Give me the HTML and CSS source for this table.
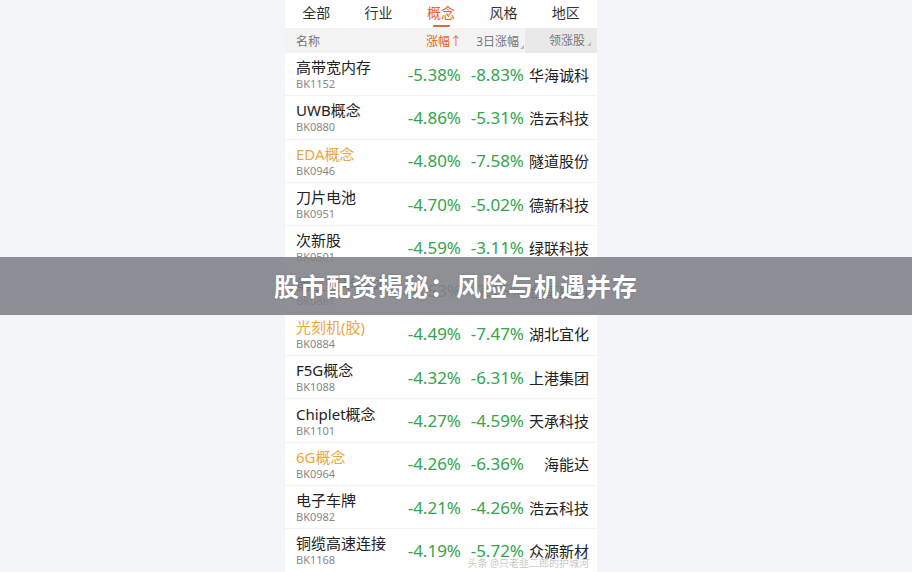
FILE: index.html
```html
<!DOCTYPE html>
<html lang="zh-CN">
<head>
    <meta charset="UTF-8">
    <meta name="viewport" content="width=device-width, initial-scale=1.0">
    <link rel="stylesheet" href="styles.css">
    <title>概念板块</title>
</head>
<body>

    <div class="panel">
        <div class="tabs">
            <div class="tab">全部</div>
            <div class="tab">行业</div>
            <div class="tab active">概念</div>
            <div class="tab">风格</div>
            <div class="tab">地区</div>
        </div>

        <div class="head">
            <span>名称</span>
            <span class="sort">涨幅↑</span>
            <span class="mark">3日涨幅</span>
            <span class="mark shade">领涨股</span>
        </div>

        <div class="row">
            <div class="name">高带宽内存<small>BK1152</small></div>
            <span class="pct">-5.38%</span><span class="pct">-8.83%</span><span class="lead">华海诚科</span>
        </div>
        <div class="row">
            <div class="name">UWB概念<small>BK0880</small></div>
            <span class="pct">-4.86%</span><span class="pct">-5.31%</span><span class="lead">浩云科技</span>
        </div>
        <div class="row">
            <div class="name gold">EDA概念<small>BK0946</small></div>
            <span class="pct">-4.80%</span><span class="pct">-7.58%</span><span class="lead">隧道股份</span>
        </div>
        <div class="row">
            <div class="name">刀片电池<small>BK0951</small></div>
            <span class="pct">-4.70%</span><span class="pct">-5.02%</span><span class="lead">德新科技</span>
        </div>
        <div class="row">
            <div class="name">次新股<small>BK0501</small></div>
            <span class="pct">-4.59%</span><span class="pct">-3.11%</span><span class="lead">绿联科技</span>
        </div>
        <div class="row">
            <div class="name">第三代半导体<small>BK0881</small></div>
            <span class="pct">-4.53%</span><span class="pct">-7.15%</span><span class="lead">台基股份</span>
        </div>
        <div class="row">
            <div class="name gold">光刻机(胶)<small>BK0884</small></div>
            <span class="pct">-4.49%</span><span class="pct">-7.47%</span><span class="lead">湖北宜化</span>
        </div>
        <div class="row">
            <div class="name">F5G概念<small>BK1088</small></div>
            <span class="pct">-4.32%</span><span class="pct">-6.31%</span><span class="lead">上港集团</span>
        </div>
        <div class="row">
            <div class="name">Chiplet概念<small>BK1101</small></div>
            <span class="pct">-4.27%</span><span class="pct">-4.59%</span><span class="lead">天承科技</span>
        </div>
        <div class="row">
            <div class="name gold">6G概念<small>BK0964</small></div>
            <span class="pct">-4.26%</span><span class="pct">-6.36%</span><span class="lead">海能达</span>
        </div>
        <div class="row">
            <div class="name">电子车牌<small>BK0982</small></div>
            <span class="pct">-4.21%</span><span class="pct">-4.26%</span><span class="lead">浩云科技</span>
        </div>
        <div class="row">
            <div class="name">铜缆高速连接<small>BK1168</small></div>
            <span class="pct">-4.19%</span><span class="pct">-5.72%</span><span class="lead">众源新材</span>
        </div>

        <div class="watermark">头条 @只老韭二郎的护城河</div>
    </div>

    <div class="banner">股市配资揭秘：风险与机遇并存</div>

</body>
</html>
```

FILE: styles.css
```css
body {
    margin: 0;
    height: 572px;
    overflow: hidden;
    background-color: #f4f5f9;
    font-family: 'Noto Sans', 'Noto Sans CJK SC', sans-serif;
    color: #222;
}

.panel {
    position: relative;
    width: 312px;
    height: 572px;
    margin-left: 285px;
    background-color: #fff;
}

.tabs {
    display: grid;
    grid-template-columns: repeat(5, 1fr);
    height: 28px;
}

.tab {
    position: relative;
    text-align: center;
    font-size: 14px;
    line-height: 26px;
    color: #333;
}

.tab.active {
    color: #e8622c;
}

.tab.active::after {
    content: '';
    position: absolute;
    left: 50%;
    bottom: 1px;
    width: 17px;
    height: 2px;
    margin-left: -8px;
    border-radius: 1px;
    background-color: #e8622c;
}

.head {
    display: grid;
    grid-template-columns: 1fr 70px 60px 64px;
    align-items: center;
    height: 25px;
    padding: 0 8px 0 11px;
    background-color: #f3f3f4;
    font-size: 12px;
    color: #777;
}

.head span {
    text-align: right;
}

.head span:first-child {
    text-align: left;
}

.head .sort {
    color: #e8622c;
    padding-right: 3px;
}

.mark {
    position: relative;
    padding-right: 6px;
}

.mark::after {
    content: '';
    position: absolute;
    right: 1px;
    bottom: 1px;
    border-left: 4px solid transparent;
    border-bottom: 4px solid #bbb;
}

.head .shade {
    margin-right: -8px;
    padding-right: 12px;
    line-height: 25px;
    background-color: #e9e9ea;
}

.head .shade::after {
    right: 6px;
    bottom: 7px;
}

.row {
    display: grid;
    grid-template-columns: 1fr 70px 63px 65px;
    align-items: center;
    height: 43.3px;
    padding: 0 8px 0 11px;
    border-bottom: 1px solid #f3f3f5;
    box-sizing: border-box;
}

.name {
    font-size: 15px;
    line-height: 18px;
    margin-top: 1px;
    white-space: nowrap;
}

.name small {
    display: block;
    margin-top: 1px;
    font-size: 11px;
    line-height: 14px;
    color: #888;
}

.name.gold {
    color: #e9a83a;
}

.pct {
    text-align: right;
    font-size: 17px;
    color: #33a54c;
}

.lead {
    text-align: right;
    font-size: 15px;
}

.watermark {
    position: absolute;
    right: 8px;
    bottom: 2px;
    font-size: 10px;
    color: rgba(150, 150, 150, 0.55);
}

.banner {
    position: absolute;
    left: 0;
    right: 0;
    top: 257px;
    height: 58px;
    line-height: 58px;
    text-align: center;
    background-color: rgba(128, 129, 135, 0.88);
    color: #fff;
    font-size: 25px;
    font-weight: bold;
    letter-spacing: 1px;
    text-shadow: 0 0 2px rgba(0, 0, 0, 0.25);
}
```
